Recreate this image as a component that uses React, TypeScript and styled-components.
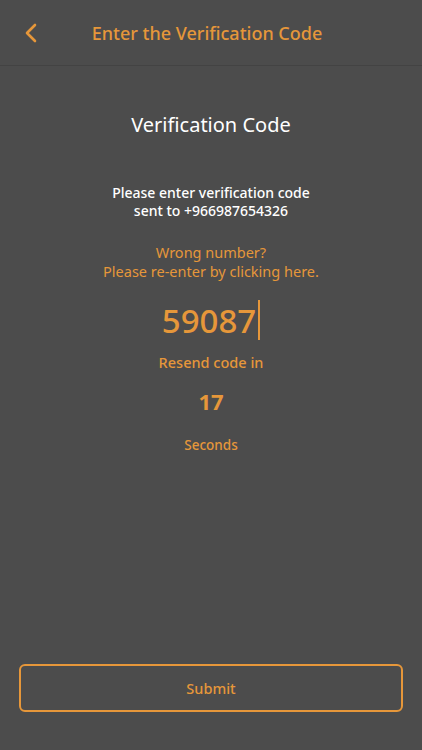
import styled, { createGlobalStyle } from "styled-components";

const orange = "#e6973a";
const font = `"Noto Sans", "Lato", sans-serif`;

const GlobalStyle = createGlobalStyle`
  html, body {
    margin: 0;
    padding: 0;
    background: #4c4c4c;
  }
  body {
    font-family: ${font};
  }
`;

export default function App() {
  return (
    <Screen>
      <GlobalStyle />
      <Header>
        <BackButton aria-label="Back">
          <svg width="14" height="20" viewBox="0 0 14 20" fill="none">
            <path
              d="M11 2 L3 10 L11 18"
              stroke={orange}
              strokeWidth="2.6"
              strokeLinecap="round"
              strokeLinejoin="round"
            />
          </svg>
        </BackButton>
        <HeaderTitle>Enter the Verification Code</HeaderTitle>
      </Header>

      <Content>
        <Title>Verification Code</Title>
        <Info>
          Please enter verification code
          <br />
          sent to +966987654326
        </Info>
        <WrongNumber>
          Wrong number?
          <br />
          Please re-enter by clicking here.
        </WrongNumber>
        <CodeRow>
          <Code>59087</Code>
          <Caret />
        </CodeRow>
        <Resend>Resend code in</Resend>
        <Countdown>17</Countdown>
        <Seconds>Seconds</Seconds>
      </Content>

      <Footer>
        <SubmitButton>Submit</SubmitButton>
      </Footer>
    </Screen>
  );
}

const Screen = styled.div`
  display: flex;
  flex-direction: column;
  width: 422px;
  height: 750px;
  background: #4c4c4c;
`;

const Header = styled.header`
  display: flex;
  align-items: center;
  justify-content: center;
  position: relative;
  height: 65px;
  border-bottom: 1px solid #434343;
  padding-right: 8px;
`;

const BackButton = styled.button`
  position: absolute;
  left: 24px;
  top: 23px;
  background: none;
  border: none;
  padding: 0;
  display: flex;
`;

const HeaderTitle = styled.h1`
  margin: 0;
  color: ${orange};
  font-size: 18px;
  font-weight: 500;
`;

const Content = styled.main`
  flex: 1;
  display: flex;
  flex-direction: column;
  align-items: center;
  text-align: center;
  padding-top: 45px;
`;

const Title = styled.h2`
  margin: 0;
  color: #ffffff;
  font-size: 20px;
  font-weight: 400;
  line-height: 28px;
`;

const Info = styled.p`
  margin: 45px 0 0;
  color: #ffffff;
  font-size: 14px;
  font-weight: 500;
  line-height: 18px;
`;

const WrongNumber = styled.p`
  margin: 23px 0 0;
  color: ${orange};
  font-size: 14.5px;
  font-weight: 400;
  line-height: 19px;
`;

const CodeRow = styled.div`
  display: flex;
  align-items: center;
  margin-top: 18px;
  height: 42px;
`;

const Code = styled.span`
  color: ${orange};
  font-size: 33px;
  font-weight: 500;
`;

const Caret = styled.span`
  width: 2px;
  height: 40px;
  margin-left: 2px;
  background: ${orange};
`;

const Resend = styled.p`
  margin: 11px 0 0;
  color: ${orange};
  font-size: 14.5px;
  font-weight: 500;
  line-height: 20px;
`;

const Countdown = styled.p`
  margin: 15px 0 0;
  color: ${orange};
  font-size: 22px;
  font-weight: 700;
  line-height: 28px;
`;

const Seconds = styled.p`
  margin: 21px 0 0;
  color: ${orange};
  font-size: 13.5px;
  font-weight: 500;
  line-height: 18px;
`;

const Footer = styled.footer`
  padding: 0 19px 38px;
`;

const SubmitButton = styled.button`
  width: 100%;
  height: 48px;
  background: transparent;
  border: 2px solid ${orange};
  border-radius: 6px;
  color: ${orange};
  font-family: ${font};
  font-size: 14.5px;
  font-weight: 500;
  cursor: pointer;
`;
